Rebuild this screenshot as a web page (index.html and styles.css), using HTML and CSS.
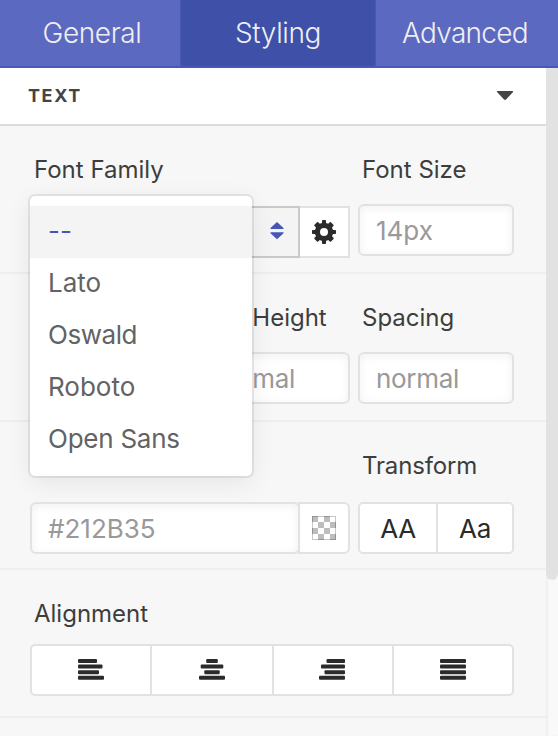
FILE: index.html
```html
<!DOCTYPE html>
<html lang="en">
<head>
<meta charset="utf-8">
<title>Styling</title>
<link rel="stylesheet" href="styles.css">
</head>
<body>
<nav class="tabs">
  <div class="tab tab-general"><span>General</span></div>
  <div class="tab tab-active"><span>Styling</span></div>
  <div class="tab tab-advanced"><span>Advanced</span></div>
</nav>
<div class="body">
  <main class="panel">
    <header class="section-head">
      <h2>TEXT</h2>
      <svg width="16" height="10" viewBox="0 0 16 10"><path d="M0 0h16v1L9 8.600q-1 .9-2 0L0 1z" fill="#444"/></svg>
    </header>

    <section class="row">
      <div class="field wide">
        <label>Font Family</label>
        <div class="group group-select">
          <div class="select">
            <svg width="14" height="18" viewBox="0 0 14 18"><path d="M7 0l6.500 6v1H.5V6zM.5 10.300h13v1L7 17.300.5 11.300z" fill="#4555b8"/></svg>
          </div>
          <button class="icon-button gear" type="button">
            <svg width="24" height="24" viewBox="0 0 24 24"><path fill="#2b2b2b" fill-rule="evenodd" d="M10 .8Q10 0 10.800 0h2.400q.8 0 .8.800v2.100l2.200.9L17.700 2.300q.6-.6 1.200 0l2.500 2.500q.6.6 0 1.200L20 7.600l1 2.400h2.200q.8 0 .8.800v2.400q0 .8-.8.800H21l-1 2.200 1.500 1.500q.6.6 0 1.200l-2.500 2.500q-.6.6-1.200 0L16.200 20l-2.200.9v2.300q0 .8-.8.800h-2.400q-.8 0-.8-.8v-2.300L7.800 20l-1.600 1.500q-.6.6-1.200 0l-2.500-2.500q-.6-.6 0-1.200L4 16.200 3 14H.8q-.8 0-.8-.8v-2.400q0-.8.800-.8H3l1-2.400L2.500 6q-.6-.6 0-1.200L5 2.300q.6-.6 1.200 0l1.600 1.500 2.200-.9zM12 8a4 4 0 1 0 0 8 4 4 0 1 0 0-8z"/></svg>
          </button>
          <ul class="menu">
            <li class="selected">--</li>
            <li>Lato</li>
            <li class="m-oswald">Oswald</li>
            <li>Roboto</li>
            <li class="m-open">Open Sans</li>
          </ul>
        </div>
      </div>
      <div class="field">
        <label>Font Size</label>
        <input class="input" type="text" placeholder="14px">
      </div>
    </section>

    <section class="row">
      <div class="field"></div>
      <div class="field">
        <label>Line Height</label>
        <input class="input i-normal" type="text" placeholder="normal">
      </div>
      <div class="field">
        <label>Spacing</label>
        <input class="input i-normal" type="text" placeholder="normal">
      </div>
    </section>

    <section class="row row-color">
      <div class="field wide">
        <label></label>
        <div class="group">
          <input class="input i-color" type="text" placeholder="#212B35">
          <button class="icon-button swatch" type="button"><i class="checker"></i></button>
        </div>
      </div>
      <div class="field">
        <label class="l-transform">Transform</label>
        <div class="segments transform"><span>AA</span><span>Aa</span></div>
      </div>
    </section>

    <section class="row row-align">
      <div class="field full">
        <label>Alignment</label>
        <div class="segments align">
          <span><svg width="26" height="22" viewBox="0 0 26 22"><g fill="#2b2b2b"><rect width="19" height="4" rx="1"/><rect y="5.600" width="24.500" height="4" rx="1"/><rect y="11.200" width="21" height="4" rx="1"/><rect y="16.800" width="26" height="4" rx="1"/></g></svg></span>
          <span><svg width="26" height="22" viewBox="0 0 26 22"><g fill="#2b2b2b"><rect x="7.200" width="11.600" height="4" rx="1"/><rect x="1.700" y="5.600" width="22.600" height="4" rx="1"/><rect x="5.300" y="11.200" width="15.400" height="4" rx="1"/><rect y="16.800" width="26" height="4" rx="1"/></g></svg></span>
          <span class="right"><svg width="26" height="22" viewBox="0 0 26 22"><g fill="#2b2b2b"><rect x="7.500" width="18.500" height="4" rx="1"/><rect x="2" y="5.600" width="24" height="4" rx="1"/><rect x="5.500" y="11.200" width="20.500" height="4" rx="1"/><rect y="16.800" width="26" height="4" rx="1"/></g></svg></span>
          <span><svg width="26" height="22" viewBox="0 0 26 22"><g fill="#2b2b2b"><rect width="26" height="4" rx="1"/><rect y="5.600" width="26" height="4" rx="1"/><rect y="11.200" width="26" height="4" rx="1"/><rect y="16.800" width="26" height="4" rx="1"/></g></svg></span>
        </div>
      </div>
    </section>
  </main>
  <div class="scrollbar"><div class="thumb"></div></div>
</div>
</body>
</html>
```
FILE: styles.css
```css
* { box-sizing: border-box; }
body {
  margin: 0;
  width: 558px;
  height: 736px;
  overflow: hidden;
  background: #f7f7f7;
  font-family: Inter, "Liberation Sans", sans-serif;
  color: #3d3d3d;
}
svg { display: block; flex: none; }
.tabs {
  display: flex;
  height: 68px;
  background: #4758b8;
  padding-bottom: 2px;
}
.tab {
  display: flex;
  justify-content: center;
  background: #5c69c1;
  color: #efeff3;
  font-size: 28px;
  font-weight: 350;
  letter-spacing: -0.4px;
  line-height: 66px;
  white-space: nowrap;
}
.tab-general { width: 180px; padding-left: 4px; }
.tab-active {
  width: 194px;
  margin: 0 1px;
  border-radius: 0 0 4px 4px;
  background: #3f50a8;
}
.tab-advanced { flex: 1; padding-right: 4px; letter-spacing: -0.7px; }
.body { display: flex; height: 668px; }
.panel { width: 546px; }
.section-head {
  display: flex;
  align-items: center;
  justify-content: space-between;
  height: 58px;
  padding: 0 33px 2px 28px;
  background: #fff;
  border-bottom: 2px solid #dcdcdc;
}
.section-head svg { margin-top: 2px; }
.section-head h2 {
  margin: 0;
  font-size: 18px;
  font-weight: 700;
  letter-spacing: 1.6px;
  color: #444;
}
.row {
  display: flex;
  gap: 8px;
  height: 148px;
  padding: 26px 32px 0 30px;
  border-bottom: 2px solid #eee;
}
.field { width: 156px; }
.field.wide { width: 320px; }
.field.full { width: 484px; }
label {
  display: block;
  height: 36px;
  margin-bottom: 16px;
  padding-left: 4px;
  font-size: 24px;
  line-height: 36px;
  white-space: nowrap;
}
.l-transform { letter-spacing: -0.15px; }
.row-color label { margin-bottom: 18px; }
.row-align label { margin-bottom: 12px; }
.input {
  display: block;
  width: 100%;
  height: 52px;
  padding: 1px 16px 0;
  border: 2px solid #e2e2e2;
  border-radius: 6px;
  background: #fff;
  box-shadow: inset 0 2px 8px rgba(40, 60, 60, 0.07);
  font: 26px Inter, "Liberation Sans", sans-serif;
}
.input::placeholder { color: #999; opacity: 1; }
.i-normal { letter-spacing: -0.3px; }
.group { display: flex; position: relative; }
.group-select { padding-top: 2px; }
.select {
  display: flex;
  align-items: center;
  justify-content: flex-end;
  width: 270px;
  height: 52px;
  padding: 0 14px 3px 0;
  border: 2px solid #c9c9c9;
  border-radius: 6px 0 0 6px;
  background: #f4f4f4;
}
.icon-button {
  display: flex;
  align-items: center;
  justify-content: center;
  height: 52px;
  padding: 0;
  border: 2px solid #e2e2e2;
  background: #fff;
}
.gear { width: 50px; border-left: 0; padding-right: 1px; }
.i-color { width: 270px; }
.swatch { width: 52px; margin-left: -2px; border-radius: 0 6px 6px 0; }
.checker {
  width: 24px;
  height: 24px;
  background: conic-gradient(#fff 25%, #bdbdbd 0 50%, #fff 0 75%, #bdbdbd 0) 0 0 / 12px 12px;
  background: repeating-conic-gradient(#fff 0 25%, #bdbdbd 0 50%) 0 0 / 12px 12px;
  box-shadow: inset 0 0 0 1px rgba(0, 0, 0, 0.22);
}
.menu {
  position: absolute;
  left: 0;
  top: -8px;
  z-index: 2;
  width: 222px;
  height: 280px;
  margin: 0;
  padding: 10px 0;
  list-style: none;
  background: #fff;
  border-radius: 5px;
  box-shadow: 0 0 0 2px rgba(0, 0, 0, 0.075), 0 6px 26px rgba(0, 0, 0, 0.08);
  font-size: 26px;
  line-height: 50px;
  color: #636363;
}
.menu li { height: 52px; padding-left: 18px; }
.menu .selected { background: #f4f4f4; color: #4555b8; }
.menu .m-oswald { letter-spacing: -0.45px; }
.menu .m-open { letter-spacing: -0.25px; }
.segments {
  display: grid;
  height: 52px;
  border: 2px solid #e2e2e2;
  border-radius: 5px;
  background: #fff;
  color: #2b2b2b;
}
.segments span {
  display: flex;
  align-items: center;
  justify-content: center;
  border-left: 2px solid #e2e2e2;
}
.segments span:first-child { border-left: 0; }
.transform { grid-template-columns: 76px 76px; font-size: 26px; letter-spacing: -0.3px; }
.align { grid-template-columns: 118px 122px 120px 120px; }
.segments .right { padding-right: 2px; }
.scrollbar {
  width: 12px;
  background: #f9f9f9;
  box-shadow: inset 2px 0 2px #efefef;
}
.thumb { height: 512px; border-radius: 0 0 6px 6px; background: #e2e2e2; }
```
